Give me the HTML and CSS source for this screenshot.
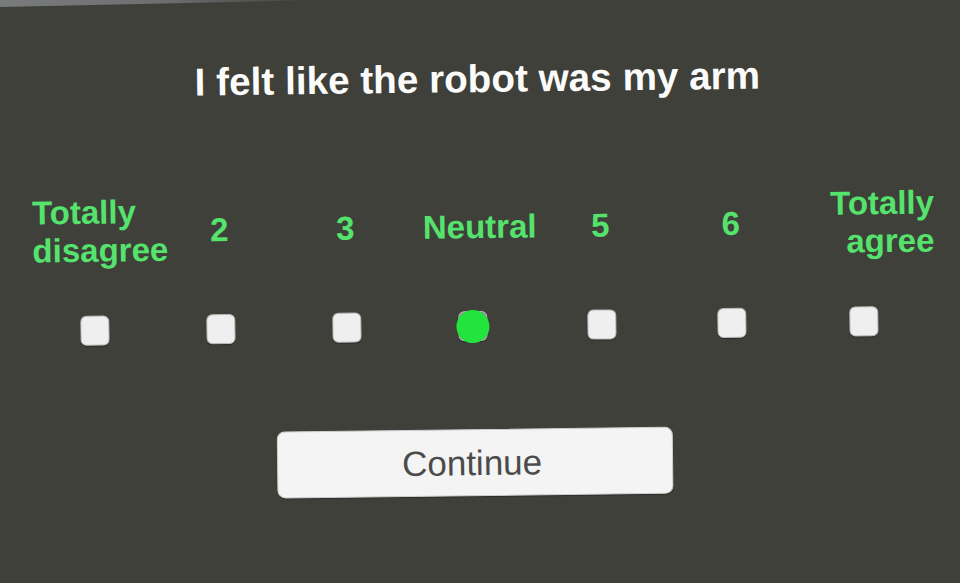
FILE: index.html
```html
<!DOCTYPE html>
<html lang="en">
<head>
<meta charset="utf-8">
<title>Questionnaire</title>
<link rel="stylesheet" href="styles.css">
</head>
<body>
<div class="edge"></div>
<main class="panel">
  <h1 class="question">I felt like the robot was my arm</h1>
  <div class="scale">
    <div class="label first">Totally<br>disagree</div>
    <div class="label">2</div>
    <div class="label">3</div>
    <div class="label neutral">Neutral</div>
    <div class="label">5</div>
    <div class="label">6</div>
    <div class="label last">Totally<br>agree</div>

    <div class="cell"><span class="box"></span></div>
    <div class="cell"><span class="box"></span></div>
    <div class="cell"><span class="box"></span></div>
    <div class="cell"><span class="box selected"><span class="dot"></span></span></div>
    <div class="cell"><span class="box"></span></div>
    <div class="cell"><span class="box"></span></div>
    <div class="cell"><span class="box"></span></div>
  </div>
  <button class="continue" type="button">Continue</button>
</main>
</body>
</html>
```

FILE: styles.css
```css
html, body {
  margin: 0;
  padding: 0;
}
body {
  width: 960px;
  height: 583px;
  overflow: hidden;
  background: #3e4039;
  font-family: "Liberation Sans", Arial, sans-serif;
  position: relative;
}
.edge {
  position: absolute;
  left: 0;
  top: 0;
  width: 320px;
  height: 7px;
  background: linear-gradient(90deg, #7a7b7d 0%, #6e6f71 50%, #3e4039 100%);
  clip-path: polygon(0 0, 100% 0, 0 100%);
}
.panel {
  display: flex;
  flex-direction: column;
  padding-top: 57px;
  transform: rotate(-0.7deg);
  transform-origin: 480px 291px;
}
.question {
  margin: 0;
  font-size: 38.7px;
  line-height: 44px;
  font-weight: 700;
  color: #fbfbfb;
  text-align: center;
  padding-left: 0;
}
.scale {
  display: grid;
  grid-template-columns: 126px 126px 126px 127px 130px 131px 132px;
  grid-template-rows: 76px 30px;
  row-gap: 46px;
  margin-top: 88px;
  margin-left: 31px;
}
.label {
  display: flex;
  align-items: center;
  justify-content: center;
  text-align: center;
  color: #55e36e;
  font-size: 33px;
  font-weight: 700;
  line-height: 38px;
  white-space: nowrap;
}
.label.first {
  justify-content: flex-start;
  text-align: left;
  padding-left: 2px;
}
.label.last {
  justify-content: flex-end;
  text-align: right;
  margin-right: -6px;
}
.label.neutral {
  padding-left: 16px;
}
.cell {
  display: flex;
  align-items: center;
  justify-content: center;
}
.box {
  position: relative;
  display: block;
  width: 29px;
  height: 30px;
  box-sizing: border-box;
  border-radius: 6px;
  background: #efefef;
  border: 1px solid #b9b9b9;
  box-shadow: 0 1px 1px rgba(0, 0, 0, 0.35);
}
.box.selected {
  background: #8d8d8d;
}
.dot {
  position: absolute;
  left: -3px;
  top: -2px;
  width: 33px;
  height: 33px;
  border-radius: 50%;
  background: #22e43d;
}
.continue {
  margin-top: 88px;
  margin-left: 275px;
  width: 396px;
  height: 67px;
  box-sizing: border-box;
  border: 1px solid #cfcfcf;
  border-radius: 8px;
  background: #f4f4f4;
  color: #4b4b4b;
  font-family: "Liberation Sans", Arial, sans-serif;
  font-size: 35px;
  font-weight: 400;
  padding: 0;
  padding-right: 6px;
  box-shadow: 0 1px 1px rgba(0, 0, 0, 0.3);
}
```
